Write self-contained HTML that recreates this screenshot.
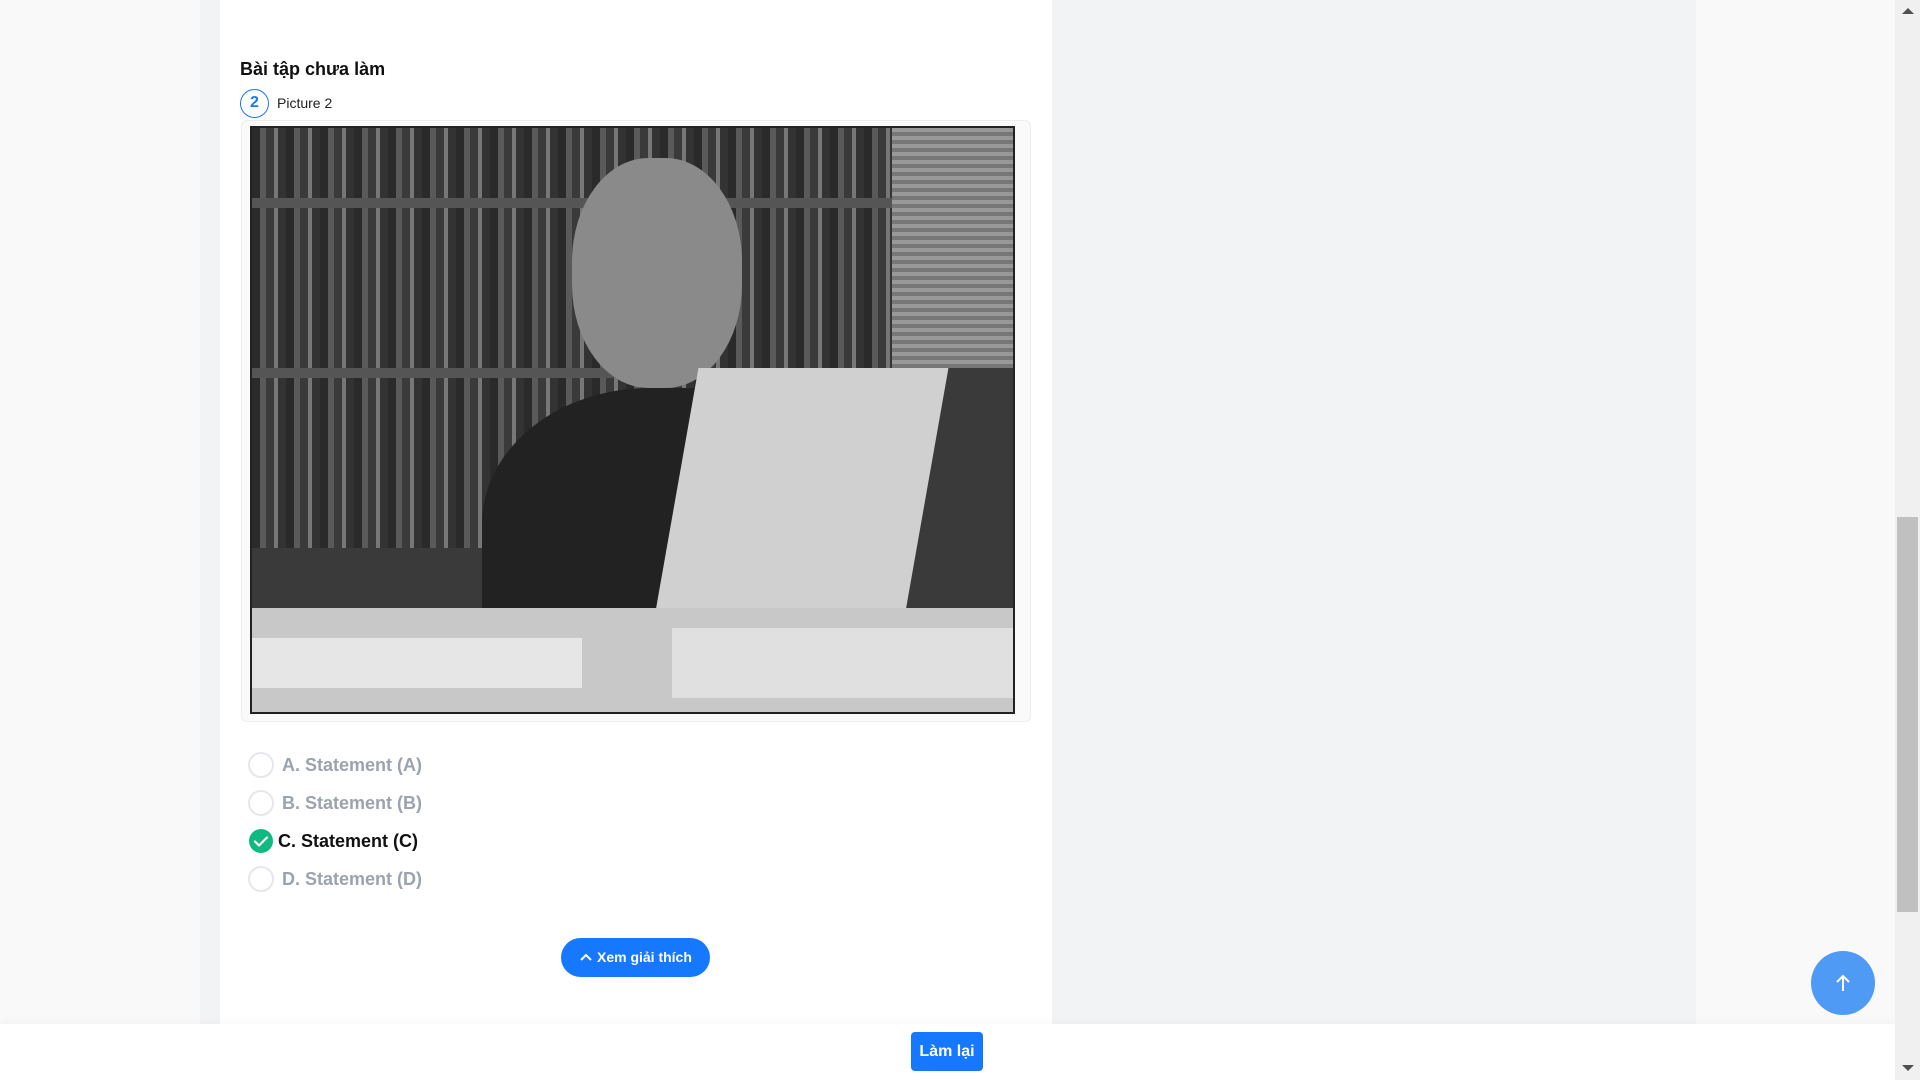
<!DOCTYPE html>
<html><head><meta charset="utf-8"><style>
*{margin:0;padding:0;box-sizing:border-box}
body{width:1920px;height:1080px;overflow:hidden;background:#f2f3f5;font-family:"Liberation Sans",sans-serif;position:relative}
.abs{position:absolute}
.radio{position:absolute;width:26px;height:26px;border:2px solid #e5e7eb;border-radius:50%;background:#fff}
.opt{position:absolute;font-size:18px;font-weight:bold;color:#9ca3af}
</style></head><body>
<div class="abs" style="left:0;top:0;width:200px;height:1080px;background:#f9f9fa"></div>
<div class="abs" style="left:1696px;top:0;width:199px;height:1080px;background:#f9f9f9"></div>
<div class="abs" style="left:220px;top:0;width:832px;height:1080px;background:#fff"></div>
<div class="abs" style="left:240px;top:59px;font-size:18px;font-weight:bold;color:#111">Bài tập chưa làm</div>
<div class="abs" style="left:240px;top:89px;width:29px;height:29px;border:1.5px solid #1677ff;border-radius:50%;color:#1677ff;font-weight:bold;font-size:16px;text-align:center;line-height:26px">2</div>
<div class="abs" style="left:277px;top:95px;font-size:14px;color:#222">Picture 2</div>
<div class="abs" style="left:241px;top:120px;width:790px;height:602px;border:1px solid #eee;border-radius:6px;background:#fafafa"></div>
<div class="abs" style="left:250px;top:126px;width:765px;height:588px;background:#3a3a3a;border:2px solid #222;overflow:hidden">
 <div class="abs" style="left:0;top:0;width:660px;height:420px;background:repeating-linear-gradient(90deg,#2a2a2a 0 8px,#5a5a5a 8px 14px,#3a3a3a 14px 22px,#777 22px 26px,#333 26px 34px)"></div>
 <div class="abs" style="left:0;top:70px;width:660px;height:10px;background:#555"></div>
 <div class="abs" style="left:0;top:240px;width:660px;height:10px;background:#555"></div>
 <div class="abs" style="left:640px;top:0;width:125px;height:240px;background:repeating-linear-gradient(0deg,#777 0 4px,#999 4px 8px)"></div>
 <div class="abs" style="left:320px;top:30px;width:170px;height:230px;background:#8a8a8a;border-radius:45%"></div>
 <div class="abs" style="left:230px;top:260px;width:420px;height:340px;background:#222;border-radius:40% 40% 0 0"></div>
 <div class="abs" style="left:420px;top:240px;width:250px;height:300px;background:#d0d0d0;transform:skewX(-10deg)"></div>
 <div class="abs" style="left:0;top:480px;width:765px;height:110px;background:#c8c8c8"></div>
 <div class="abs" style="left:0;top:510px;width:330px;height:50px;background:#e6e6e6"></div>
 <div class="abs" style="left:420px;top:500px;width:345px;height:70px;background:#e0e0e0"></div>
</div>
<div class="radio" style="left:248px;top:752px"></div><div class="opt" style="left:282px;top:755px">A. Statement (A)</div>
<div class="radio" style="left:248px;top:790px"></div><div class="opt" style="left:282px;top:793px">B. Statement (B)</div>
<svg class="abs" style="left:248px;top:828px" width="26" height="26"><circle cx="13" cy="13" r="12" fill="#10b981"/><path d="M7 13.5l4 4 8-8" stroke="#fff" stroke-width="2.2" fill="none" stroke-linecap="round" stroke-linejoin="round"/></svg>
<div class="opt" style="left:278px;top:831px;color:#111">C. Statement (C)</div>
<div class="radio" style="left:248px;top:866px"></div><div class="opt" style="left:282px;top:869px">D. Statement (D)</div>
<div class="abs" style="left:561px;top:938px;width:149px;height:39px;background:#1677ff;border-radius:20px;color:#fff;font-size:14px;font-weight:bold;line-height:39px;text-align:center">
<svg width="14" height="10" style="vertical-align:0"><path d="M2 8l5-5 5 5" stroke="#fff" stroke-width="2" fill="none"/></svg> Xem giải thích</div>
<div class="abs" style="left:0;top:1024px;width:1895px;height:56px;background:#fff;box-shadow:0 -2px 8px rgba(0,0,0,0.03)"></div>
<div class="abs" style="left:911px;top:1032px;width:72px;height:39px;background:#1677ff;border-radius:4px;color:#fff;font-size:16px;font-weight:bold;line-height:39px;text-align:center">Làm lại</div>
<svg class="abs" style="left:1811px;top:951px" width="64" height="64"><circle cx="32" cy="32" r="32" fill="#4f9af5"/><path d="M32 40V25M26 31l6-6 6 6" stroke="#fff" stroke-width="2" fill="none"/></svg>
<div class="abs" style="left:1895px;top:0;width:25px;height:1080px;background:#f0f0f0"></div>
<div class="abs" style="left:1897px;top:517px;width:21px;height:395px;background:#c0c0c0"></div>
<div class="abs" style="left:1902px;top:8px;border-left:6px solid transparent;border-right:6px solid transparent;border-bottom:6px solid #505050"></div>
<div class="abs" style="left:1902px;top:1065px;border-left:6px solid transparent;border-right:6px solid transparent;border-top:6px solid #505050"></div>
</body></html>
